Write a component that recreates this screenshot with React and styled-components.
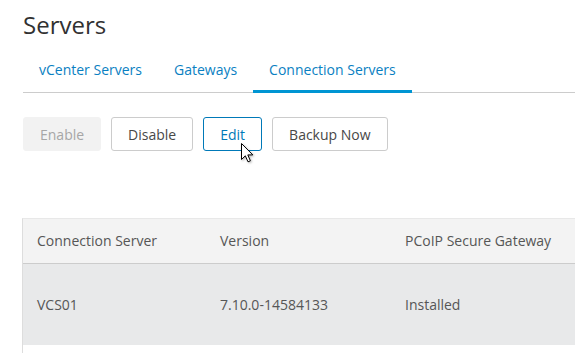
import React from "react";
import styled, { createGlobalStyle } from "styled-components";

const GlobalStyle = createGlobalStyle`
	html, body {
		margin: 0;
		padding: 0;
		background: #fff;
		overflow: hidden;
	}
	body {
		font-family: "Open Sans", "Liberation Sans", sans-serif;
		color: #565656;
	}
`;

const tabs = ["vCenter Servers", "Gateways", "Connection Servers"];
const actions = [
	{ label: "Enable", disabled: true },
	{ label: "Disable" },
	{ label: "Edit", focused: true },
	{ label: "Backup Now" },
];
const columns = ["Connection Server", "Version", "PCoIP Secure Gateway"];
const rows = [["VCS01", "7.10.0-14584133", "Installed"]];

const App = () => {
	return (
		<>
			<GlobalStyle />
			<Page>
				<Title>Servers</Title>
				<TabBar>
					{tabs.map((t, i) => (
						<Tab key={t} $active={i === 2}>
							{t}
						</Tab>
					))}
				</TabBar>
				<Toolbar>
					{actions.map((a) => (
						<ButtonWrap key={a.label}>
							<Button
								type="button"
								disabled={a.disabled}
								$focused={a.focused}
							>
								{a.label}
							</Button>
							{a.focused && (
								<Cursor width="13" height="20" viewBox="0 0 13 20">
									<path
										d="M0.5 0.5 L0.5 16.5 L4.3 12.8 L7 18.8 L9.4 17.8 L6.8 11.9 L11.8 11.9 Z"
										fill="#fff"
										stroke="#000"
										strokeWidth="1"
										strokeLinejoin="miter"
									/>
								</Cursor>
							)}
						</ButtonWrap>
					))}
				</Toolbar>
				<Grid>
					<HeaderRow>
						{columns.map((c) => (
							<Cell key={c}>{c}</Cell>
						))}
					</HeaderRow>
					{rows.map((r) => (
						<DataRow key={r[0]}>
							{r.map((v, i) => (
								<Cell key={i}>{v}</Cell>
							))}
						</DataRow>
					))}
					<Filler />
				</Grid>
			</Page>
		</>
	);
};

export default App;

const Page = styled.div`
	padding: 9px 0 0 23px;
	height: 353px;
	box-sizing: border-box;
	overflow: hidden;
`;

const Title = styled.h1`
	margin: 0;
	font-size: 24px;
	line-height: 32px;
	font-weight: 400;
	color: #313131;
`;

const TabBar = styled.div`
	display: flex;
	margin-top: 19px;
	border-bottom: 1px solid #cccccc;
	height: 32px;
`;

const Tab = styled.div`
	position: relative;
	padding: 0 16px;
	font-size: 14px;
	line-height: 20px;
	color: #0a7fc2;
	&::after {
		content: "";
		display: ${(p) => (p.$active ? "block" : "none")};
		position: absolute;
		left: 0;
		right: 0;
		bottom: -1px;
		height: 3px;
		background: #0095d3;
	}
`;

const Toolbar = styled.div`
	display: flex;
	column-gap: 10px;
	margin-top: 24px;
`;

const ButtonWrap = styled.div`
	position: relative;
`;

const Button = styled.button`
	height: 34px;
	padding: 0 16px;
	border: 1px solid ${(p) => (p.$focused ? "#0079b8" : "#cccccc")};
	border-radius: 3px;
	background: #fff;
	font-family: "Open Sans", "Liberation Sans", sans-serif;
	font-size: 14px;
	color: ${(p) => (p.$focused ? "#0079b8" : "#484848")};
	cursor: pointer;
	&:disabled {
		background: #f2f2f2;
		border-color: #f2f2f2;
		color: #a6a6a6;
		cursor: default;
	}
`;

const Cursor = styled.svg`
	position: absolute;
	left: 38px;
	top: 26px;
	filter: drop-shadow(1px 1px 1px rgba(0, 0, 0, 0.3));
`;

const Grid = styled.div`
	margin-top: 67px;
	margin-left: -1px;
	width: 700px;
	border-left: 1px solid #dddddd;
	border-top: 1px solid #e8e8e8;
`;

const HeaderRow = styled.div`
	display: grid;
	grid-template-columns: 183px 185px 1fr;
	height: 44px;
	align-items: center;
	background: #f3f3f3;
	border-bottom: 1px solid #cccccc;
`;

const DataRow = styled.div`
	display: grid;
	grid-template-columns: 183px 185px 1fr;
	height: 81px;
	align-items: center;
	background: #e8e9ea;
`;

const Cell = styled.div`
	padding-left: 14px;
	font-size: 14px;
	line-height: 20px;
	color: #565656;
`;

const Filler = styled.div`
	height: 40px;
	background: #fff;
`;
